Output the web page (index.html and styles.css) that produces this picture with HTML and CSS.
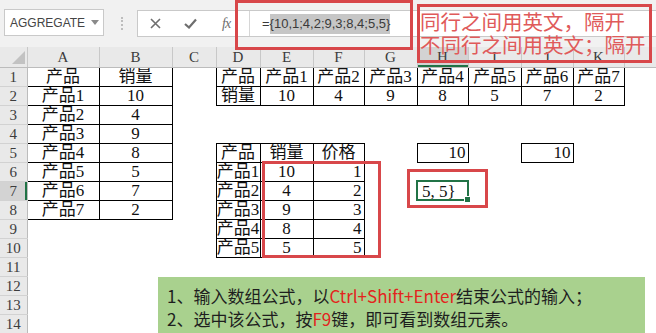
FILE: index.html
```html
<!DOCTYPE html>
<html lang="zh-CN">
<head>
<meta charset="utf-8">
<title>Excel 数组公式</title>
<link rel="stylesheet" href="styles.css">
</head>
<body>
<div class="page">
  <div class="toolbar">
    <div class="namebox">
      <span class="nb-text">AGGREGATE</span>
      <svg class="dd" width="8" height="5" viewBox="0 0 8 5"><path d="M0 0H8L4 5Z" fill="#8a8a8a"/></svg>
    </div>
    <div class="grip"></div>
    <div class="fbar">
      <div class="ficons">
        <svg class="ic-x" width="11" height="11" viewBox="0 0 11 11"><path d="M1 1L10 10M10 1L1 10" stroke="#6e6e6e" stroke-width="1.6" fill="none"/></svg>
        <svg class="ic-ok" width="13" height="11" viewBox="0 0 13 11"><path d="M1 6L5 9.5L12 1.5" stroke="#6e6e6e" stroke-width="2.2" fill="none"/></svg>
        <span class="fx">fx</span>
      </div>
      <div class="finput"><span class="eq">=</span><span class="sel">{10,1;4,2;9,3;8,4;5,5}</span></div>
    </div>
  </div>

  <table class="sheet">
    <colgroup>
      <col class="w-rh"><col class="w-a"><col class="w-b"><col class="w-c"><col class="w-d"><col class="w-e"><col class="w-f"><col class="w-g"><col class="w-h"><col class="w-i"><col class="w-j"><col class="w-k"><col class="w-l">
    </colgroup>
    <tr class="hdr">
      <th class="corner"><svg class="tri" width="13" height="13" viewBox="0 0 13 13"><path d="M13 0V13H0Z" fill="#c2c2c2"/></svg></th>
      <th>A</th><th>B</th><th>C</th><th>D</th><th>E</th><th>F</th><th>G</th><th class="hsel">H</th><th>I</th><th>J</th><th>K</th><th></th>
    </tr>
    <tr>
      <th class="rh">1</th>
      <td class="b c">产品</td><td class="b c">销量</td><td></td>
      <td class="b c">产品</td><td class="b c">产品1</td><td class="b c">产品2</td><td class="b c">产品3</td><td class="b c">产品4</td><td class="b c">产品5</td><td class="b c">产品6</td><td class="b c">产品7</td><td></td>
    </tr>
    <tr>
      <th class="rh">2</th>
      <td class="b c">产品1</td><td class="b c">10</td><td></td>
      <td class="b c">销量</td><td class="b c">10</td><td class="b c">4</td><td class="b c">9</td><td class="b c">8</td><td class="b c">5</td><td class="b c">7</td><td class="b c">2</td><td></td>
    </tr>
    <tr>
      <th class="rh">3</th>
      <td class="b c">产品2</td><td class="b c">4</td><td></td>
      <td></td><td></td><td></td><td></td><td></td><td></td><td></td><td></td><td></td>
    </tr>
    <tr>
      <th class="rh">4</th>
      <td class="b c">产品3</td><td class="b c">9</td><td></td>
      <td></td><td></td><td></td><td></td><td></td><td></td><td></td><td></td><td></td>
    </tr>
    <tr>
      <th class="rh">5</th>
      <td class="b c">产品4</td><td class="b c">8</td><td></td>
      <td class="b c">产品</td><td class="b c">销量</td><td class="b c">价格</td><td></td><td class="b r">10</td><td></td><td class="b r">10</td><td></td><td></td>
    </tr>
    <tr>
      <th class="rh">6</th>
      <td class="b c">产品5</td><td class="b c">5</td><td></td>
      <td class="b c">产品1</td><td class="b c">10</td><td class="b r">1</td><td></td><td></td><td></td><td></td><td></td><td></td>
    </tr>
    <tr>
      <th class="rh rsel">7</th>
      <td class="b c">产品6</td><td class="b c">7</td><td></td>
      <td class="b c">产品2</td><td class="b c">4</td><td class="b r">2</td><td></td><td class="edit">5, 5}</td><td></td><td></td><td></td><td></td>
    </tr>
    <tr>
      <th class="rh">8</th>
      <td class="b c">产品7</td><td class="b c">2</td><td></td>
      <td class="b c">产品3</td><td class="b c">9</td><td class="b r">3</td><td></td><td></td><td></td><td></td><td></td><td></td>
    </tr>
    <tr>
      <th class="rh">9</th>
      <td></td><td></td><td></td>
      <td class="b c">产品4</td><td class="b c">8</td><td class="b r">4</td><td></td><td></td><td></td><td></td><td></td><td></td>
    </tr>
    <tr>
      <th class="rh">10</th>
      <td></td><td></td><td></td>
      <td class="b c">产品5</td><td class="b c">5</td><td class="b r">5</td><td></td><td></td><td></td><td></td><td></td><td></td>
    </tr>
    <tr><th class="rh">11</th><td></td><td></td><td></td><td></td><td></td><td></td><td></td><td></td><td></td><td></td><td></td><td></td></tr>
    <tr><th class="rh">12</th><td></td><td></td><td></td><td></td><td></td><td></td><td></td><td></td><td></td><td></td><td></td><td></td></tr>
    <tr><th class="rh">13</th><td></td><td></td><td></td><td></td><td></td><td></td><td></td><td></td><td></td><td></td><td></td><td></td></tr>
    <tr><th class="rh">14</th><td></td><td></td><td></td><td></td><td></td><td></td><td></td><td></td><td></td><td></td><td></td><td></td></tr>
  </table>

  <div class="active-frame"><span class="handle"></span></div>

  <div class="mark mark-formula"></div>
  <div class="mark mark-note">
    <div class="note-line">同行之间用英文，隔开</div>
    <div class="note-line">不同行之间用英文；隔开</div>
  </div>
  <div class="mark mark-range"></div>
  <div class="mark mark-cell"></div>

  <div class="tipbox">
    <p>1、输入数组公式，以<span class="hl">Ctrl+Shift+Enter</span>结束公式的输入；</p>
    <p>2、选中该公式，按<span class="hl">F9</span>键，即可看到数组元素。</p>
  </div>
</div>
</body>
</html>
```

FILE: styles.css
```css
html, body {
  margin: 0;
  padding: 0;
  background: #ffffff;
}

.page {
  position: relative;
  width: 656px;
  height: 333px;
  overflow: hidden;
  font-family: "Liberation Sans", sans-serif;
}

/* ---------- formula toolbar ---------- */
.toolbar {
  display: flex;
  align-items: flex-start;
  height: 47px;
  background: #f1f1f1;
}

.namebox {
  box-sizing: border-box;
  margin: 9px 0 0 4px;
  width: 100px;
  height: 27px;
  border: 1px solid #c9c9c9;
  background: #ffffff;
  display: flex;
  align-items: center;
  padding-left: 5px;
  font-size: 12px;
  color: #444444;
}

.dd {
  margin-left: auto;
  margin-right: 4px;
}

.grip {
  margin: 17px 0 0 17px;
  width: 0;
  height: 13px;
  border-left: 2px dotted #bdbdbd;
}

.fbar {
  box-sizing: border-box;
  margin: 10px 0 0 14px;
  flex: 1;
  height: 27px;
  display: flex;
  background: #ffffff;
  border: 1px solid #c9c9c9;
  border-right: none;
}

.ficons {
  width: 111px;
  flex: none;
  border-right: 1px solid #d6d6d6;
  display: flex;
  align-items: center;
}

.ic-x { margin-left: 12px; }
.ic-ok { margin-left: 23px; }

.fx {
  margin-left: 25px;
  font-family: "Liberation Serif", serif;
  font-style: italic;
  font-size: 14px;
  color: #6e6e6e;
  letter-spacing: -1px;
}

.finput {
  flex: 1;
  padding-left: 12px;
  font-size: 13px;
  line-height: 25px;
  color: #3a3a3a;
  white-space: nowrap;
}

.sel {
  display: inline-block;
  line-height: 20px;
  background: #c6c6c6;
}

/* ---------- sheet ---------- */
.sheet {
  border-collapse: collapse;
  table-layout: fixed;
  width: 664px;
  font-family: "Liberation Serif", "Noto Sans CJK SC", serif;
}

.w-rh { width: 27px; }
.w-a { width: 72px; }
.w-b { width: 73px; }
.w-c { width: 44px; }
.w-d { width: 44px; }
.w-e { width: 53px; }
.w-f { width: 51px; }
.w-g { width: 53px; }
.w-h { width: 51px; }
.w-i { width: 53px; }
.w-j { width: 52px; }
.w-k { width: 51px; }
.w-l { width: 40px; }

.hdr th {
  height: 20px;
  padding: 0;
  background: #e9e9e9;
  border-right: 1px solid #c8c8c8;
  border-bottom: 1px solid #bcbcbc;
  font-weight: normal;
  font-size: 15px;
  line-height: 19px;
  color: #3c3c3c;
  text-align: center;
}

.hdr .corner {
  position: relative;
  text-align: right;
  vertical-align: bottom;
}

.tri {
  display: block;
  margin: 0 2px 3px auto;
}

.hdr .hsel {
  background: #d3d3d3;
  box-shadow: inset 0 -2px 0 #217346;
}

tr {
  height: 19px;
}

.rh {
  padding: 0;
  background: #e9e9e9;
  border-right: 1px solid #bcbcbc;
  border-bottom: 1px solid #d2d2d2;
  font-weight: normal;
  font-size: 15px;
  line-height: 18px;
  color: #3c3c3c;
  text-align: center;
}

.rsel {
  background: #d3d3d3;
  box-shadow: inset -2px 0 0 #217346;
}

td {
  padding: 0;
  font-size: 17px;
  line-height: 18px;
  color: #111111;
  white-space: nowrap;
  overflow: hidden;
  vertical-align: bottom;
}

td.b { border: 1px solid #000000; }
td.c { text-align: center; }
td.r { text-align: right; padding-right: 2px; }

td.edit {
  padding-left: 5px;
  overflow: visible;
}

.active-frame {
  position: absolute;
  left: 416px;
  top: 180px;
  width: 49px;
  height: 17px;
  border: 2px solid #217346;
}

.handle {
  position: absolute;
  right: -4px;
  bottom: -4px;
  width: 5px;
  height: 5px;
  background: #217346;
  border: 1px solid #ffffff;
}

/* ---------- annotation shapes ---------- */
.mark {
  position: absolute;
  box-sizing: border-box;
  border: 3px solid #d8474a;
}

.mark-formula {
  left: 235px;
  top: 0;
  width: 178px;
  height: 50px;
}

.mark-note {
  left: 417px;
  top: 4px;
  width: 235px;
  height: 59px;
  padding-top: 3px;
  font-family: "Noto Sans CJK SC", sans-serif;
  font-size: 20.5px;
  line-height: 23px;
  color: #e05a5a;
  white-space: nowrap;
  overflow: hidden;
}

.mark-range {
  left: 262px;
  top: 161px;
  width: 119px;
  height: 97px;
}

.mark-cell {
  left: 407px;
  top: 169px;
  width: 81px;
  height: 39px;
}

.tipbox {
  position: absolute;
  left: 158px;
  top: 277px;
  width: 487px;
  height: 60px;
  box-sizing: border-box;
  padding: 7px 0 0 9px;
  background: #a9d18e;
  font-family: "Noto Sans CJK SC", sans-serif;
  font-size: 17px;
  line-height: 23px;
  color: #1e1e1e;
  white-space: nowrap;
}

.tipbox p {
  margin: 0;
}

.hl {
  color: #e3241d;
}
```
